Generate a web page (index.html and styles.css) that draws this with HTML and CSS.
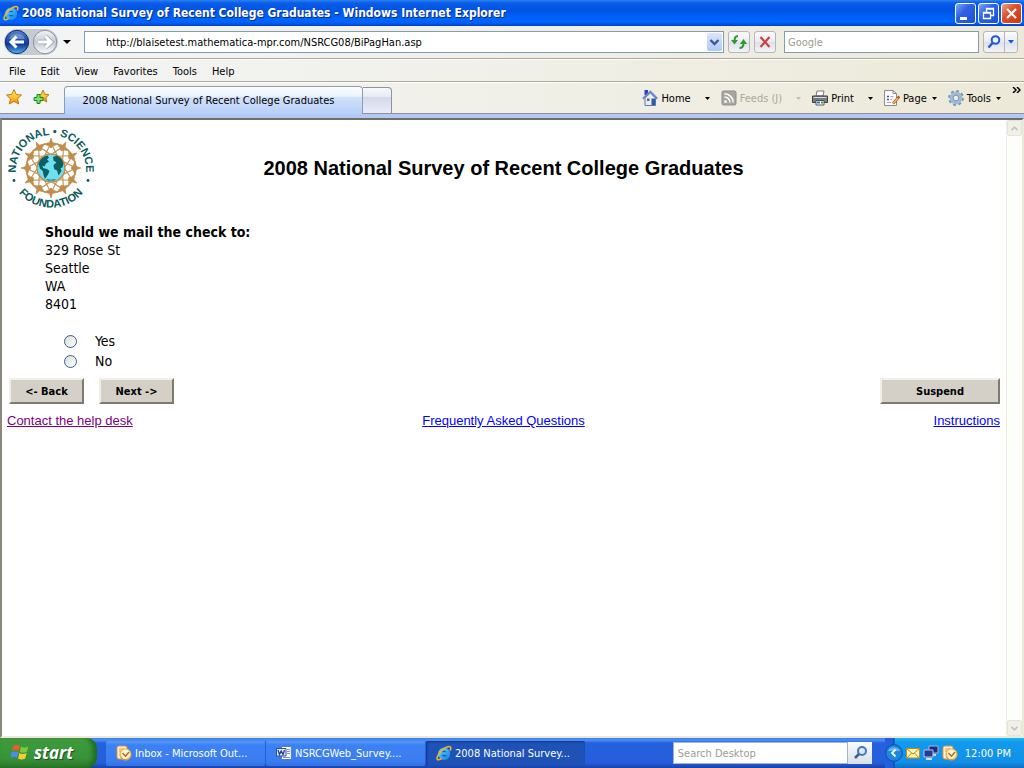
FILE: index.html
```html
<!DOCTYPE html>
<html lang="en">
<head>
    <meta charset="UTF-8">
    <meta name="viewport" content="width=device-width, initial-scale=1.0">
    <title>2008 National Survey of Recent College Graduates</title>
    <link rel="stylesheet" href="styles.css">
</head>
<body>
    <!-- Shared gradients and icons -->
    <svg class="defs" width="0" height="0" aria-hidden="true">
        <defs>
            <linearGradient id="gold" x1="0" y1="0" x2="0" y2="1">
                <stop offset="0" stop-color="#fff08a"/><stop offset=".5" stop-color="#ffc62b"/><stop offset="1" stop-color="#f08a10"/>
            </linearGradient>
            <linearGradient id="ieBlue" x1="0" y1="0" x2="1" y2="1">
                <stop offset="0" stop-color="#9fe6ff"/><stop offset=".5" stop-color="#38b0f4"/><stop offset="1" stop-color="#1270d0"/>
            </linearGradient>
            <linearGradient id="backBlue" x1="0" y1="0" x2="0" y2="1">
                <stop offset="0" stop-color="#5a84cc"/><stop offset=".45" stop-color="#1b4ba6"/><stop offset=".6" stop-color="#123a90"/><stop offset="1" stop-color="#4fb4f6"/>
            </linearGradient>
            <linearGradient id="fwdGrey" x1="0" y1="0" x2="0" y2="1">
                <stop offset="0" stop-color="#f4f5f8"/><stop offset=".5" stop-color="#c4c9d3"/><stop offset="1" stop-color="#fbfcfd"/>
            </linearGradient>
            <symbol id="ie" viewBox="0 0 16 16">
                <path d="M13.600 9.600H5.400c.2 1.500 1.300 2.300 2.700 2.300 1.100 0 1.900-.4 2.400-1.200h2.900c-.8 2.300-2.800 3.600-5.300 3.600-3.300 0-5.700-2.200-5.700-5.600 0-3.300 2.400-5.700 5.700-5.700 3.600 0 5.700 2.500 5.500 6.600zM5.500 7.500h5.200c-.2-1.300-1.100-2-2.500-2-1.500 0-2.400.7-2.700 2z" fill="url(#ieBlue)" stroke="#3fb4f2" stroke-width=".7"/>
                <path d="M14.200 5.600c1.200-2.600.7-4.200-1.200-4.100C9.600 1.700 4.600 5.800 2.300 9.900.7 12.800.6 14.800 2.300 14.800c1 0 2.300-.6 3.500-1.500" fill="none" stroke="#f0b41e" stroke-width="1.600"/>
            </symbol>
            <symbol id="outlook" viewBox="0 0 16 16">
                <rect x="1" y="1" width="10" height="13" rx="2" fill="#fff1d8" stroke="#e8943c"/>
                <path d="M3 4h5M3 6h3" stroke="#e8943c"/>
                <circle cx="9.500" cy="9.500" r="5.700" fill="url(#gold)" stroke="#e0a04a" stroke-width=".8"/>
                <circle cx="9.500" cy="9.500" r="4.500" fill="#fff6dd"/>
                <path d="M6.500 8l3 3.200L13 7" fill="none" stroke="#b3691a" stroke-width="1.500"/>
            </symbol>
        </defs>
    </svg>

    <header class="titlebar">
        <svg class="icon" viewBox="0 0 16 16"><use href="#ie"/></svg>
        <span class="titlebar-text">2008 National Survey of Recent College Graduates - Windows Internet Explorer</span>
        <div class="window-buttons">
            <button type="button" aria-label="Minimize"><svg viewBox="0 0 19 19"><path d="M4 14.500h7" stroke="#fff" stroke-width="3"/></svg></button>
            <button type="button" aria-label="Restore"><svg viewBox="0 0 19 19"><path d="M7.500 8V4.500h7v7H12M7 5h8M4.500 8.500h7v6h-7zM4 9h8" fill="none" stroke="#fff" stroke-width="1.300"/></svg></button>
            <button type="button" class="close" aria-label="Close"><svg viewBox="0 0 19 19"><path d="M5 5l9 9M14 5l-9 9" stroke="#fff" stroke-width="2.200"/></svg></button>
        </div>
    </header>

    <div class="chrome">
        <div class="navbar">
            <div class="nav-pair">
                <button type="button" aria-label="Back"><svg viewBox="0 0 26 26"><circle cx="13" cy="13" r="11.700" fill="url(#backBlue)" stroke="#12306e"/><path d="M5 10a8.500 8 0 0 1 16 0" fill="#a9c3ee" opacity=".45"/><path d="M20 13H8M12.500 7.500L7 13l5.500 5.500" fill="none" stroke="#fff" stroke-width="3"/></svg></button>
                <button type="button" aria-label="Forward"><svg viewBox="0 0 26 26"><circle cx="13" cy="13" r="11.700" fill="url(#fwdGrey)" stroke="#8b929e"/><path d="M6 13h12M13.500 7.500L19 13l-5.500 5.500" fill="none" stroke="#9ba2ae" stroke-width="4.500"/><path d="M6 13h12M13.500 7.500L19 13l-5.500 5.500" fill="none" stroke="#fff" stroke-width="3"/></svg></button>
            </div>
            <button type="button" class="recent" aria-label="Recent pages"><svg class="arrow" viewBox="0 0 8 4"><path d="M0 0h8L4 4z"/></svg></button>
            <div class="address">
                <input type="text" aria-label="Address" value="http://blaisetest.mathematica-mpr.com/NSRCG08/BiPagHan.asp">
                <button type="button" aria-label="Show addresses"><svg viewBox="0 0 15 18"><path d="M3.500 7l4 4 4-4" fill="none" stroke="#40588c" stroke-width="2.400"/></svg></button>
            </div>
            <button type="button" class="tool" aria-label="Refresh"><svg viewBox="0 0 20 20"><path d="M9 4C6 4 5.500 6 5.500 9" fill="none" stroke="#2c9a2c" stroke-width="2"/><path d="M2 8h7l-3.500 4.500z" fill="#2c9a2c"/><path d="M10.500 16c3 0 4-2 4-5" fill="none" stroke="#2c9a2c" stroke-width="2"/><path d="M11 12h7l-3.500-5z" fill="#2c9a2c"/></svg></button>
            <button type="button" class="tool" aria-label="Stop"><svg viewBox="0 0 20 20"><path d="M5.500 5l9 10M14.500 5l-9 10" stroke="#d04040" stroke-width="2.200"/></svg></button>
            <input type="search" class="search" aria-label="Search the web" placeholder="Google">
            <div class="search-buttons">
                <button type="button" aria-label="Search"><svg viewBox="0 0 20 20"><circle cx="11.500" cy="8" r="3.800" fill="#e8f3ff" stroke="#2458d0" stroke-width="2"/><path d="M8.500 11L4.500 15.500" stroke="#2458d0" stroke-width="2.400"/></svg></button>
                <button type="button" class="narrow" aria-label="Search options"><svg viewBox="0 0 12 20"><path d="M3 8h6l-3 3.500z" fill="#0b55d8"/></svg></button>
            </div>
        </div>

        <nav class="menubar">
            <button type="button">File</button>
            <button type="button">Edit</button>
            <button type="button">View</button>
            <button type="button">Favorites</button>
            <button type="button">Tools</button>
            <button type="button">Help</button>
        </nav>

        <div class="tabrow">
            <div class="favorites">
                <button type="button" aria-label="Favorites center"><svg viewBox="0 0 18 18"><path d="M9 1.500l2.200 5 5.300.5-4 3.700 1.200 5.300L9 13.300 4.300 16l1.200-5.300-4-3.700 5.300-.5z" fill="url(#gold)" stroke="#c47812"/></svg></button>
                <button type="button" aria-label="Add to favorites"><svg viewBox="0 0 18 18"><path d="M11 2l1.700 4.300 4.300.4-3.200 3 1 4.300-3.800-2.200L7.200 14l1-4.300L5 6.700l4.300-.4z" fill="url(#gold)" stroke="#c47812"/><path d="M5 6.500h3v3h3v3H8v3H5v-3H2v-3h3z" fill="#7ce070" stroke="#178a20"/></svg></button>
            </div>
            <button type="button" class="tab">2008 National Survey of Recent College Graduates</button>
            <button type="button" class="new-tab" aria-label="New tab"></button>
            <div class="commands">
                <button type="button" class="split">
                    <svg class="icon" viewBox="0 0 16 16"><path d="M2.500 0h3.500v5H2.500z" fill="#2742c8"/><path d="M3 8v7.500h10.500V8L8.300 3z" fill="#e6ecf8" stroke="#60759f"/><path d="M.8 8.800L8.300 1.600l7 7.200" fill="none" stroke="#6c8bc4" stroke-width="2"/><path d="M9.500 8.500H13V15H9.500z" fill="#2a5cae"/><path d="M5 8.500h2.500V11H5z" fill="#666"/></svg>
                    <span>Home</span><svg class="arrow" viewBox="0 0 5 3"><path d="M0 0h5L2.500 3z"/></svg>
                </button>
                <button type="button" class="split muted" disabled>
                    <svg class="icon" viewBox="0 0 16 16"><rect x="1" y="1" width="14" height="14" rx="1.500" fill="#a7a69f" stroke="#8f8e88"/><circle cx="4.600" cy="11.600" r="1.400" fill="#fff"/><path d="M3.500 7a5.500 5.500 0 0 1 5.500 5.500M3.500 3.800a8.700 8.700 0 0 1 8.700 8.700" fill="none" stroke="#fff" stroke-width="1.500"/></svg>
                    <span>Feeds (J)</span><svg class="arrow" viewBox="0 0 5 3"><path d="M0 0h5L2.500 3z"/></svg>
                </button>
                <button type="button" class="split">
                    <svg class="icon" viewBox="0 0 16 16"><path d="M4 6l1-5h7l-1 5z" fill="#fff" stroke="#777"/><path d="M.5 6h15v6.500H.5z" fill="#777b82" stroke="#3c3f44"/><path d="M1.500 7.500h13" stroke="#d9dbdf"/><path d="M4 10.500h8V15H4z" fill="#fff" stroke="#555"/><path d="M5 12.500h3" stroke="#2878c8" stroke-width="2"/><path d="M9 12.500h2" stroke="#3aa05a" stroke-width="2"/></svg>
                    <span>Print</span><svg class="arrow" viewBox="0 0 5 3"><path d="M0 0h5L2.500 3z"/></svg>
                </button>
                <button type="button">
                    <svg class="icon" viewBox="0 0 16 16"><path d="M.5.500H9l3.500 3v12H.5z" fill="#fafaff" stroke="#8a8c94"/><path d="M9 .5v3h3.500" fill="none" stroke="#8a8c94"/><path d="M3 6.500h2M3 9.500h2" stroke="#3d4fa8" stroke-width="1.600"/><path d="M6.500 6.500h3M6.500 9.500h1.500M3 12.500h4" stroke="#a4a8c2"/><path d="M9 13.500L14.500 7.500" stroke="#a8571c" stroke-width="2.600"/><path d="M9.300 13.200L14 8" stroke="#f7c64d" stroke-width="1.400"/><path d="M14 7.800l1.300-1.400" stroke="#d34a4a" stroke-width="2.400"/></svg>
                    <span>Page</span><svg class="arrow" viewBox="0 0 5 3"><path d="M0 0h5L2.500 3z"/></svg>
                </button>
                <button type="button">
                    <svg class="icon" viewBox="0 0 16 16"><circle cx="8" cy="8" r="6.800" fill="none" stroke="#7394b4" stroke-width="2.200" stroke-dasharray="2.800 2.540"/><circle cx="8" cy="8" r="4.600" fill="none" stroke="#9dbbd8" stroke-width="3.600"/><circle cx="8" cy="8" r="2.800" fill="#f0eedf" stroke="#6483a2" stroke-width=".8"/></svg>
                    <span>Tools</span><svg class="arrow" viewBox="0 0 5 3"><path d="M0 0h5L2.500 3z"/></svg>
                </button>
                <button type="button" class="more" aria-label="More commands"><svg viewBox="0 0 9 6"><path d="M1 0l3 3-3 3M5 0l3 3-3 3" fill="none" stroke="#000" stroke-width="1.500"/></svg></button>
            </div>
        </div>
    </div>

    <div class="viewport">
        <main class="page">
            <div class="banner">
                <svg class="nsf" viewBox="0 0 88 88" role="img" aria-label="National Science Foundation">
                    <defs>
                        <path id="arcTop" d="M9.500 52A35 35 0 1 1 78.500 52"/>
                        <path id="arcBottom" d="M4.200 56A42.500 42.500 0 0 0 83.800 56"/>
                        <g id="person" fill="#c08d4c" stroke="#c08d4c" stroke-width=".7">
                            <path d="M44 14l1.500 4.500 5.500 1.500-4.500 1.800L44 24l-2.500-2.200L37 20l5.500-1.500z"/>
                            <path d="M42.500 22l-4.500 9M45.500 22l4.500 9" fill="none" stroke-width="1.100"/>
                        </g>
                    </defs>
                    <circle cx="44" cy="44" r="24.500" fill="none" stroke="#c08d4c" stroke-width=".9"/>
                    <use href="#person"/>
                    <use href="#person" transform="rotate(30 44 44)"/>
                    <use href="#person" transform="rotate(60 44 44)"/>
                    <use href="#person" transform="rotate(90 44 44)"/>
                    <use href="#person" transform="rotate(120 44 44)"/>
                    <use href="#person" transform="rotate(150 44 44)"/>
                    <use href="#person" transform="rotate(180 44 44)"/>
                    <use href="#person" transform="rotate(210 44 44)"/>
                    <use href="#person" transform="rotate(240 44 44)"/>
                    <use href="#person" transform="rotate(270 44 44)"/>
                    <use href="#person" transform="rotate(300 44 44)"/>
                    <use href="#person" transform="rotate(330 44 44)"/>
                    <circle cx="44" cy="44" r="14" fill="#6fe0f0" stroke="#c08d4c" stroke-width="1.500"/>
                    <path d="M31.500 40c1-4 4-7.500 9-8.500l1.500 2-2 2 2 2-3 2-1.500 3-2-1 .5 2.500 4 1 2.500 2-1.500 3.500-3 4.500-1.500-4-.5-3.500-3-3zM46 33l4-1.500c3.500 1.500 5.500 4.500 6.500 8l-1 4-2 .5 1 3-3 4.500-1.500-5-3-1.500-.5-4 3-2.500-3-2zM39 55c3 1 7 1 10 0l-2 1.500h-6z" fill="#0b5e62"/>
                    <text class="nsf-text"><textPath href="#arcTop" startOffset="50%" text-anchor="middle">NATIONAL • SCIENCE</textPath></text>
                    <text class="nsf-text"><textPath href="#arcBottom" startOffset="50%" text-anchor="middle">FOUNDATION</textPath></text>
                    <circle cx="7" cy="56.500" r="1.400" fill="#0b5a5c"/>
                    <circle cx="81" cy="56.500" r="1.400" fill="#0b5a5c"/>
                </svg>
                <h1>2008 National Survey of Recent College Graduates</h1>
            </div>

            <form>
                <fieldset class="question">
                    <legend>Should we mail the check to:</legend>
                    <p>329 Rose St<br>Seattle<br>WA<br>8401</p>
                    <div class="option">
                        <input type="radio" id="mailYes" name="mail" value="yes">
                        <label for="mailYes">Yes</label>
                    </div>
                    <div class="option">
                        <input type="radio" id="mailNo" name="mail" value="no">
                        <label for="mailNo">No</label>
                    </div>
                </fieldset>
                <div class="actions">
                    <button type="button">&lt;- Back</button>
                    <button type="button">Next -&gt;</button>
                    <button type="button" class="suspend">Suspend</button>
                </div>
            </form>

            <div class="links">
                <a class="visited" href="#help">Contact the help desk</a>
                <a href="#faq">Frequently Asked Questions</a>
                <a href="#instructions">Instructions</a>
            </div>
        </main>
        <div class="scrollbar">
            <button type="button" aria-label="Scroll up" disabled><svg viewBox="0 0 15 15"><path d="M4 9.500L7.500 6 11 9.500" fill="none" stroke="#c4c3b8" stroke-width="2"/></svg></button>
            <button type="button" aria-label="Scroll down" disabled><svg viewBox="0 0 15 15"><path d="M4 5.500L7.500 9 11 5.500" fill="none" stroke="#c4c3b8" stroke-width="2"/></svg></button>
        </div>
    </div>

    <footer class="taskbar">
        <button type="button" class="start">
            <svg viewBox="0 0 18 18"><path d="M3 3.500c2-1.300 4-1.300 6 0L7.800 8.200c-2-1.200-4-1.200-6 0z" fill="#ee5a24"/><path d="M10 4c2 1.200 4 1.200 6.500 0l-1.300 4.800c-2.200 1.200-4.400 1.200-6.400 0z" fill="#7cc93a"/><path d="M1.500 9.500c2-1.300 4-1.300 6 0l-1.200 4.700c-2-1.200-4-1.200-6 0z" fill="#4a8af4"/><path d="M8.500 10c2 1.200 4 1.200 6.500 0l-1.300 4.800c-2.200 1.200-4.400 1.200-6.400 0z" fill="#fccb34"/></svg>
            start
        </button>
        <div class="tasks">
            <button type="button"><svg class="icon" viewBox="0 0 16 16"><use href="#outlook"/></svg><span>Inbox - Microsoft Out...</span></button>
            <button type="button"><svg class="icon" viewBox="0 0 16 16"><path d="M5.500 1.500h9.800v13H5.500z" fill="#fff" stroke="#5d79b4"/><path d="M11 4.500h3M11 6.500h3M11 8.500h3M7 12.500h7" stroke="#7a92c8"/><path d="M.5 3.500H10v7.500H.5z" fill="#e9f0ff" stroke="#2d4d9c"/><path d="M2 5l1.500 4.500L5.200 6 7 9.500 8.500 5" fill="none" stroke="#1c3f95" stroke-width="1.300"/></svg><span>NSRCGWeb_Survey....</span></button>
            <button type="button" class="active"><svg class="icon" viewBox="0 0 16 16"><use href="#ie"/></svg><span>2008 National Survey...</span></button>
        </div>
        <div class="desktop-search">
            <input type="text" aria-label="Search Desktop" placeholder="Search Desktop">
            <button type="button" aria-label="Search"><svg viewBox="0 0 20 20"><circle cx="12" cy="8" r="4" fill="#d9ecff" stroke="#3f78c0" stroke-width="2"/><path d="M9 11l-4 4" stroke="#3a5c98" stroke-width="2.500"/></svg></button>
        </div>
        <div class="tray">
            <button type="button" class="expand" aria-label="Show hidden icons"><svg viewBox="0 0 18 18"><circle cx="9" cy="9" r="8.300" fill="#1c86e0" stroke="#0d4fae"/><path d="M3 7a6.500 6 0 0 1 12 0" fill="#9bd6fa" opacity=".6"/><path d="M10.500 5.500L7 9l3.500 3.500" fill="none" stroke="#fff" stroke-width="1.800"/></svg></button>
            <svg class="mail" viewBox="0 0 14 12"><rect x=".5" y="1.500" width="13" height="9.500" fill="#fff3b8" stroke="#c28c1c"/><path d="M1 2l6 5 6-5M1 11l4.500-5M13 11L8.500 6" fill="none" stroke="#c28c1c"/></svg>
            <svg class="icon" viewBox="0 0 16 16"><path d="M6 1h9v7H6z" fill="#1b2f80" stroke="#aab4d4"/><path d="M9 9h4v2H9z" fill="#cfd4e2"/><path d="M1 5h9v7H1z" fill="#243c96" stroke="#bcc4dc"/><path d="M3 13h6v2H3z" fill="#d9dce6"/></svg>
            <svg class="icon" viewBox="0 0 16 16"><use href="#outlook"/></svg>
            <time>12:00 PM</time>
        </div>
    </footer>
</body>
</html>
```

FILE: styles.css
```css
* {
    margin: 0;
    padding: 0;
    box-sizing: border-box;
}

body {
    display: flex;
    flex-direction: column;
    min-height: 100vh;
    background: #fff;
    color: #000;
    font-family: "DejaVu Sans Condensed", "Open Sans", sans-serif;
    font-size: 11px;
}

button,
input {
    font: inherit;
    color: inherit;
    border: none;
    border-radius: 0;
    background: none;
}

button svg {
    display: block;
    flex: none;
}

.defs {
    position: absolute;
}

.icon {
    width: 16px;
    height: 16px;
    flex: none;
}

/* Title bar */
.titlebar {
    display: flex;
    align-items: center;
    height: 26px;
    padding: 0 2px 0 3px;
    background: linear-gradient(#2a82f5 0, #0a5ce8 3px, #0054e3 10px, #0061fb 18px, #0066ff 22px, #0040cc 26px);
    color: #fff;
}

.titlebar-text {
    flex: 1;
    padding-left: 3px;
    font-size: 12px;
    font-weight: bold;
    text-shadow: 1px 1px #0a2a80;
    white-space: nowrap;
}

.window-buttons {
    display: flex;
    gap: 2px;
}

.window-buttons button {
    width: 21px;
    height: 21px;
    border: 1px solid #fff;
    border-radius: 3px;
    background: linear-gradient(135deg, #7ea6f7, #2f63e2 40%, #1c4fd8);
}

.window-buttons .close {
    background: linear-gradient(135deg, #f0a088, #e0502c 40%, #c83810);
}

/* Browser toolbars */
.chrome {
    background: linear-gradient(to right, #f3f4f5, #f1f0e8 50%, #ece9d8);
}

.navbar {
    display: flex;
    align-items: center;
    height: 33px;
    padding: 0 6px 0 4px;
    border-bottom: 1px solid #aca899;
}

.nav-pair {
    display: flex;
    gap: 2px;
    border-radius: 14px;
    background: #c6cbd3;
}

.nav-pair svg {
    width: 26px;
    height: 26px;
}

.recent {
    padding: 8px 13px 8px 5px;
}

.recent .arrow {
    width: 8px;
    height: 4px;
}

.address {
    display: flex;
    flex: 1;
    height: 22px;
    margin-right: 4px;
    border: 1px solid #7f9db9;
    background: #fff;
}

.address input {
    flex: 1;
    min-width: 0;
    padding-left: 21px;
}

.address button {
    width: 15px;
    height: 18px;
    margin: 1px;
    border-radius: 2px;
    background: linear-gradient(#dbe6fd, #aec8f7);
}

.tool {
    width: 22px;
    height: 22px;
    margin-right: 4px;
}

.tool,
.search-buttons {
    border: 1px solid #b4b6bb;
    border-radius: 3px;
    background: linear-gradient(#fcfcfd, #e9ebf2 50%, #dde0ea 51%, #f3f4f8);
}

.search {
    width: 195px;
    height: 22px;
    margin: 0 4px;
    padding-left: 3px;
    border: 1px solid #7f9db9;
    background: #fff;
}

.search::placeholder,
.desktop-search input::placeholder {
    color: #9d9c93;
    opacity: 1;
}

.search-buttons {
    display: flex;
    width: 35px;
    height: 22px;
}

.search-buttons svg {
    height: 20px;
}

.search-buttons .narrow {
    border-left: 1px solid #b4b6bb;
}

.menubar {
    display: flex;
    gap: 15px;
    height: 23px;
    padding: 1px 0 0 9px;
    border-top: 1px solid #fff;
    border-bottom: 1px solid #aca899;
}

.tabrow {
    display: flex;
    align-items: flex-end;
    height: 36px;
    border-top: 1px solid #fff;
    border-bottom: 4px solid #b3c8f4;
}

.favorites {
    display: flex;
    align-self: stretch;
    align-items: flex-start;
    gap: 9px;
    width: 64px;
    padding: 5px 0 0 5px;
    border-bottom: 1px solid #8f9299;
}

.favorites svg {
    width: 18px;
    height: 18px;
}

.tab {
    width: 299px;
    height: 28px;
    padding-right: 10px;
    border: 1px solid #8f9bb0;
    border-bottom: none;
    border-radius: 4px 4px 0 0;
    background: linear-gradient(#fdfeff, #eaf2fc 35%, #d2e2fb 36%, #b7cef8);
    white-space: nowrap;
}

.new-tab {
    width: 29px;
    height: 27px;
    border: 1px solid #8f9299;
    border-left: none;
    border-radius: 0 4px 0 0;
    background: linear-gradient(#f7f8fb, #e9ebf4 35%, #d3d9ea 36%, #e9ecf8);
}

.commands {
    display: flex;
    flex: 1;
    align-items: center;
    align-self: stretch;
    justify-content: flex-end;
    gap: 11px;
    padding-right: 3px;
    border-bottom: 1px solid #8f9299;
}

.commands button {
    display: flex;
    align-items: center;
    gap: 3px;
}

.commands .arrow {
    width: 5px;
    height: 3px;
    margin-left: 2px;
}

.commands .split .arrow {
    margin-left: 11px;
}

.commands .muted {
    color: #aca899;
    fill: #c0bdb0;
}

.commands .more {
    align-self: flex-start;
    padding-top: 4px;
}

.more svg {
    width: 9px;
    height: 6px;
}

/* Survey page */
.viewport {
    display: flex;
    flex: 1;
    border: 2px solid;
    border-color: #716f64 #ece9d8 #ece9d8 #8a887c;
}

.page {
    flex: 1;
    padding: 4px 6px 0 5px;
    font-family: "Liberation Sans", Arial, sans-serif;
}

.banner {
    display: grid;
    grid-template-columns: 1fr auto 1fr;
    align-items: center;
}

.nsf {
    width: 88px;
    height: 88px;
}

.nsf-text {
    font-family: "Liberation Sans", Arial, sans-serif;
    font-size: 11px;
    font-weight: bold;
    fill: #0b5a5c;
}

.banner h1 {
    font-size: 20px;
    line-height: 24px;
}

.question {
    padding: 11px 0 0 38px;
    border: none;
    font-family: "DejaVu Sans Condensed", "Open Sans", sans-serif;
    font-size: 14px;
    line-height: 18px;
}

.question legend {
    float: left;
    width: 100%;
    font-weight: bold;
}

.question p {
    clear: both;
    padding-bottom: 18px;
}

.option {
    display: flex;
    align-items: center;
    gap: 18px;
    height: 20px;
    padding-left: 19px;
}

.option input {
    appearance: none;
    width: 13px;
    height: 13px;
    border: 1px solid #35618f;
    border-radius: 50%;
    background: linear-gradient(135deg, #dcdcd7, #fff);
}

.option input:checked {
    background: radial-gradient(#22a022 0 3px, #f2f2ee 4px);
}

.actions {
    display: flex;
    gap: 15px;
    padding: 7px 0 0 2px;
}

.actions button {
    width: 75px;
    height: 26px;
    border: 2px solid;
    border-color: #f1efe8 #7d7a70 #7d7a70 #f1efe8;
    background: #d4d0c8;
    font-family: "DejaVu Sans Condensed", "Open Sans", sans-serif;
    font-size: 11px;
    font-weight: bold;
}

.actions .suspend {
    width: 120px;
    margin-left: auto;
}

.links {
    display: grid;
    grid-template-columns: 1fr auto 1fr;
    padding-top: 8px;
    font-size: 13px;
    line-height: 18px;
}

.links a {
    color: #00f;
}

.links a:first-child {
    justify-self: start;
}

.links a:last-child {
    justify-self: end;
}

.links .visited {
    color: #800080;
}

.scrollbar {
    display: flex;
    flex-direction: column;
    justify-content: space-between;
    width: 16px;
    border-left: 1px solid #eeede5;
    background: #fdfdfa;
}

.scrollbar button {
    width: 15px;
    height: 16px;
    border: 1px solid #e6e4d8;
    border-radius: 2px;
    background: #f1f0e8;
}

/* Taskbar */
.taskbar {
    display: flex;
    align-items: center;
    height: 30px;
    background: linear-gradient(#3b7be8 0, #4a93f5 2px, #2560dd 5px, #245edb 25px, #1941a5 30px);
    color: #fff;
}

.start {
    display: flex;
    align-items: center;
    gap: 4px;
    width: 97px;
    height: 30px;
    padding: 0 0 2px 10px;
    border-radius: 0 10px 10px 0;
    background: linear-gradient(#5eac56 0, #3c9a3c 4px, #389338 20px, #2a7a2a 30px);
    box-shadow: inset -4px 0 5px #1f6a20;
    font-family: "Open Sans", sans-serif;
    font-size: 17px;
    font-style: italic;
    font-weight: bold;
    text-shadow: 1px 1px 1px #1d4a1d;
}

.start svg {
    width: 20px;
    height: 20px;
}

.tasks {
    display: flex;
    flex: 1;
    gap: 1px;
    padding-left: 9px;
}

.tasks button {
    display: flex;
    align-items: center;
    gap: 3px;
    width: 159px;
    height: 25px;
    padding-left: 10px;
    border-radius: 2px;
    background: linear-gradient(#5a9bfb, #3c81f3 4px, #3a7df0 20px, #3371e4);
    white-space: nowrap;
}

.tasks .active {
    background: #1e52b7;
    box-shadow: inset 1px 1px 2px #123684;
}

.desktop-search {
    display: flex;
    width: 199px;
    height: 22px;
    margin-right: 13px;
}

.desktop-search input {
    flex: 1;
    min-width: 0;
    padding-left: 4px;
    border: 1px solid #9db4d8;
    background: #fff;
    color: #000;
}

.desktop-search button {
    width: 24px;
    padding: 1px 2px;
    background: linear-gradient(#fbfcfd, #d9dfe8);
}

.tray {
    display: flex;
    align-items: center;
    gap: 3px;
    height: 30px;
    padding-right: 13px;
    background:
        linear-gradient(to right, #245edb 8px, #0b3f9c 9px, transparent 10px),
        linear-gradient(#19b9f3 0, #129aee 4px, #1290e8 24px, #0d6fc4 30px);
}

.expand svg {
    width: 18px;
    height: 18px;
}

.mail {
    width: 14px;
    height: 12px;
}

.tray time {
    padding-left: 4px;
    white-space: nowrap;
}
```
